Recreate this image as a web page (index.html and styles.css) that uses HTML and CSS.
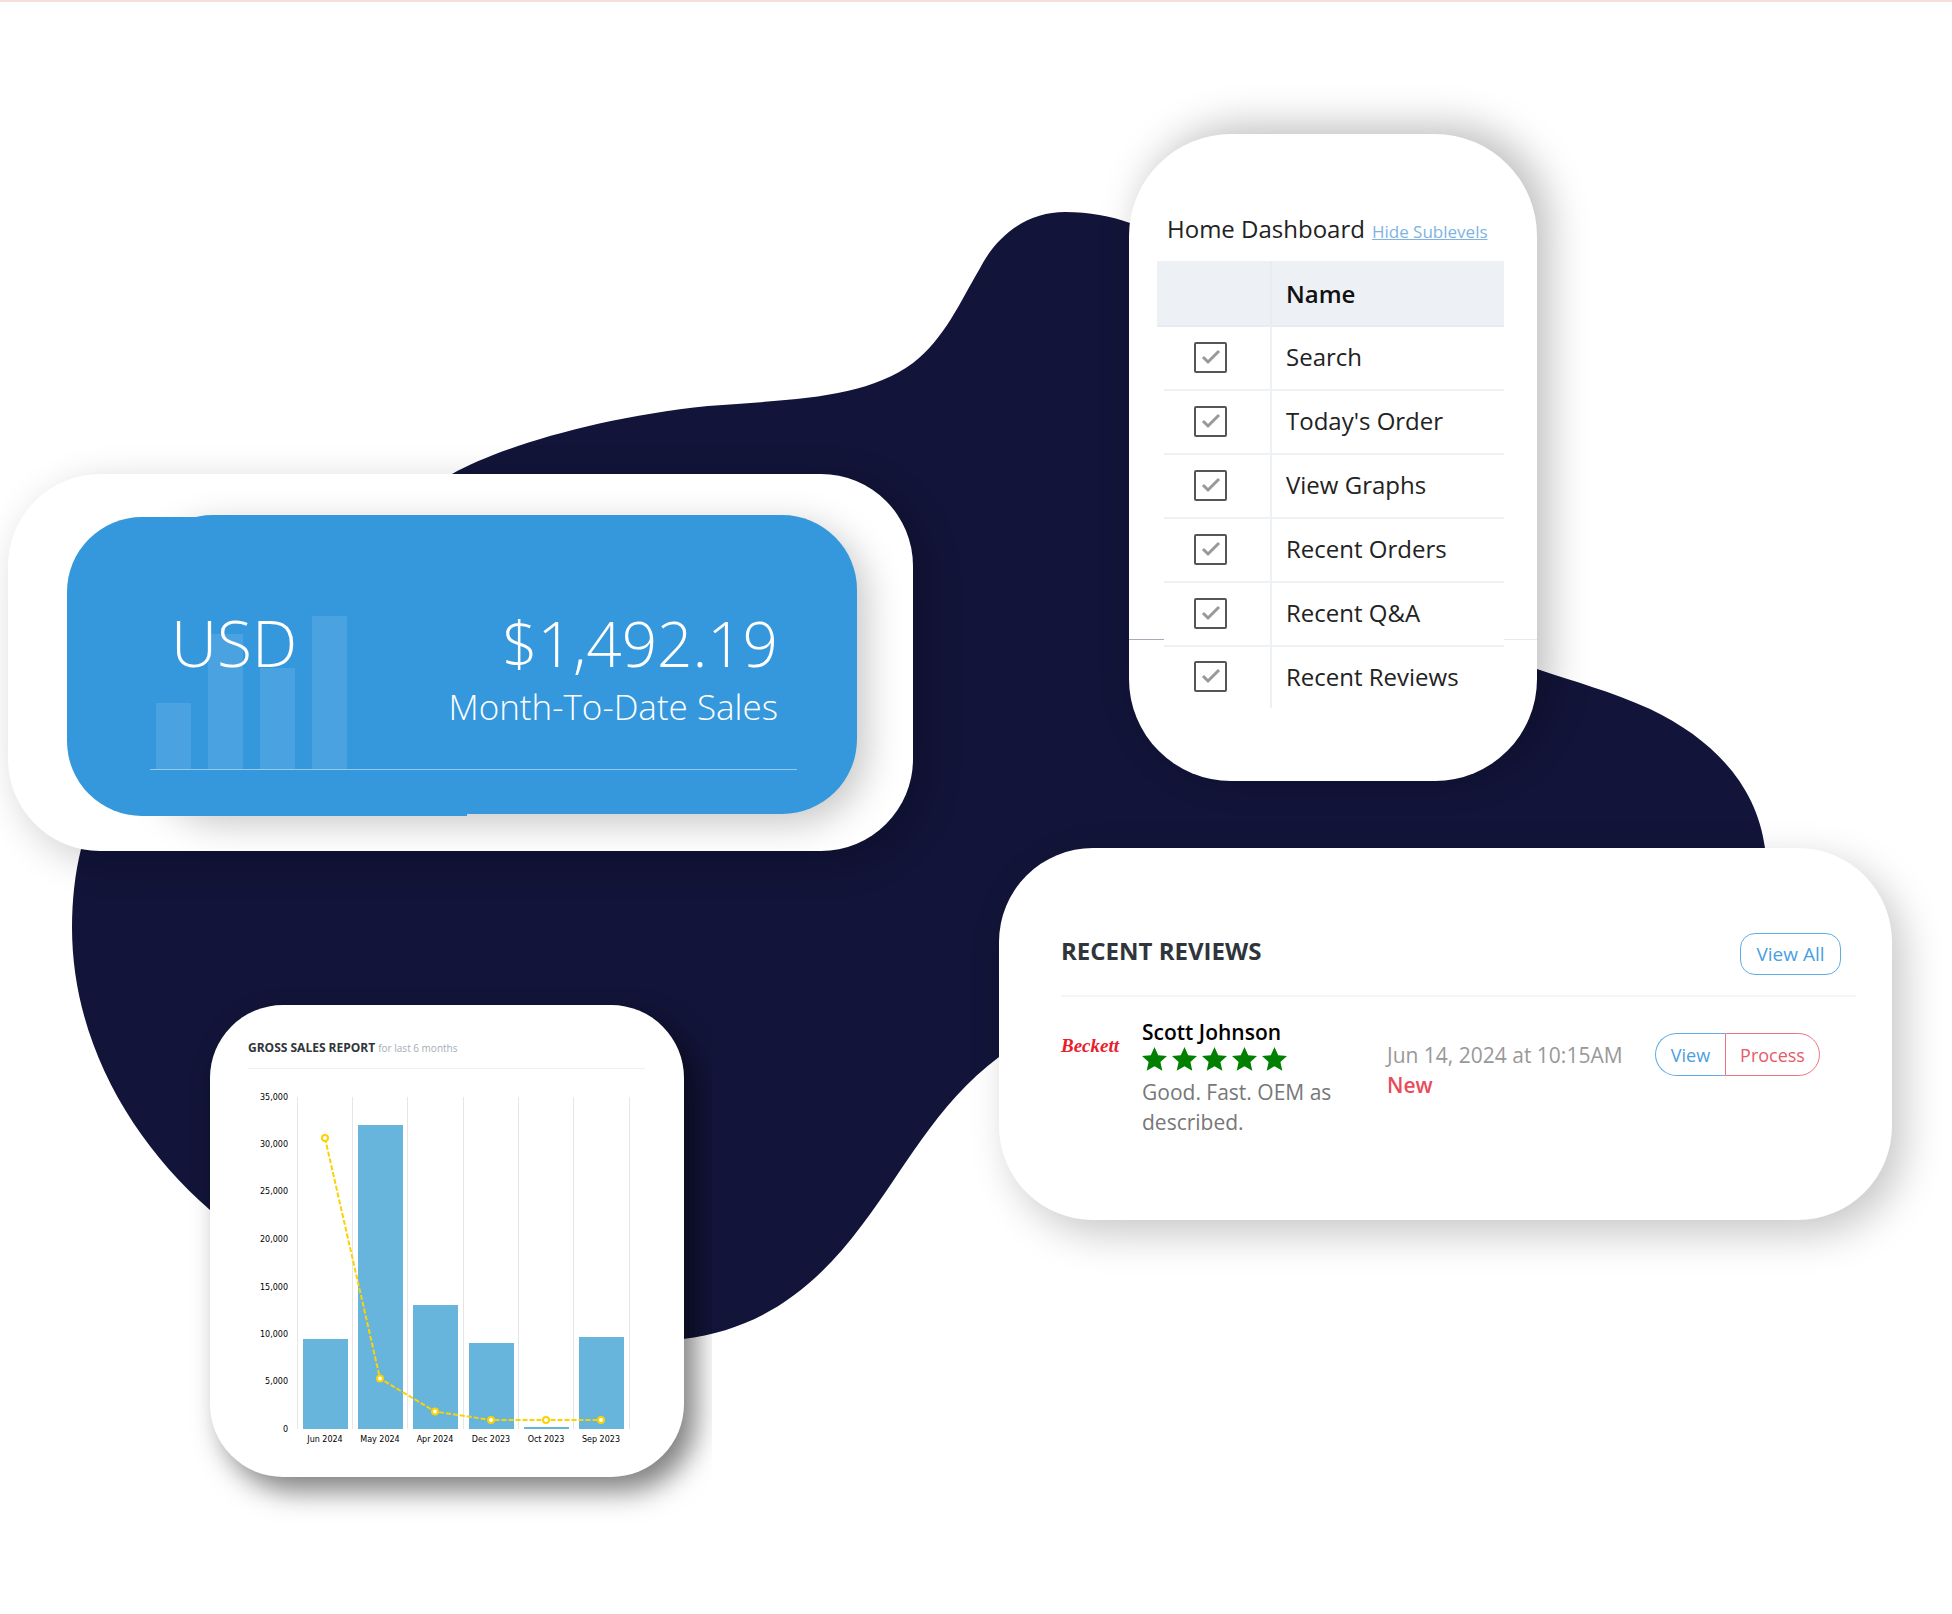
FILE: index.html
```html
<!DOCTYPE html>
<html lang="en">
<head>
<meta charset="utf-8">
<title>Store dashboard</title>
<link rel="stylesheet" href="styles.css">
</head>
<body>
<main class="stage">
  <svg class="blob" viewBox="0 0 1952 1614" aria-hidden="true">
    <path d="M452 474C500 447 600 417 708 406C800 399 865 398 913 363C945 338 960 302 979 270C998 232 1030 212 1065 212C1090 212 1110 216 1130 223L1330 400L1537 669C1575 682 1610 691 1650 709C1715 740 1757 787 1765 848L1700 950L999 1057C935 1105 903 1172 862 1225C810 1295 755 1330 683 1339L400 1300L210 1210C130 1140 72 1040 72 927C72 900 75 873 81 849L200 600Z"/>
  </svg>

  <div class="column column-left">
    <section class="card sales">
      <div class="sales-panel">
        <div class="figures">
          <svg class="bars" viewBox="0 0 191 153" aria-hidden="true">
            <path d="M0 87h35v66H0zM52 18h35v135H52zM104 52h35v101h-35zM156 0h35v153h-35z"/>
          </svg>
          <p class="currency">USD</p>
          <div class="total">
            <p class="amount">$1,492.19</p>
            <p class="caption">Month-To-Date Sales</p>
          </div>
        </div>
      </div>
    </section>

    <section class="card report">
      <header class="report-head">
        <h2>GROSS SALES REPORT</h2>
        <span>for last 6 months</span>
      </header>
      <svg class="chart" viewBox="0 0 474 408" role="img" aria-label="Gross sales for the last 6 months">
        <path class="gridlines" d="M87.5 28V360M142.5 28V360M197.5 28V360M253.5 28V360M308.5 28V360M363.5 28V360M419.5 28V360"/>
        <path class="columns" d="M93 270h45v90H93zM148 56h45v304h-45zM203 236h45v124h-45zM259 274h45v86h-45zM314 358h45v2h-45zM369 268h45v92h-45z"/>
        <polyline class="trend" points="115,69 170,309.500 225,342.500 281,351 336,351 391,351"/>
        <g class="points">
          <circle cx="115" cy="69" r="3"/><circle cx="170" cy="309.500" r="3"/><circle cx="225" cy="342.500" r="3"/>
          <circle cx="281" cy="351" r="3"/><circle cx="336" cy="351" r="3"/><circle cx="391" cy="351" r="3"/>
        </g>
        <g class="axis-y">
          <text x="78" y="31">35,000</text><text x="78" y="78">30,000</text><text x="78" y="125">25,000</text>
          <text x="78" y="173">20,000</text><text x="78" y="221">15,000</text><text x="78" y="268">10,000</text>
          <text x="78" y="315">5,000</text><text x="78" y="363">0</text>
        </g>
        <g class="axis-x">
          <text x="115" y="373">Jun 2024</text><text x="170" y="373">May 2024</text><text x="225" y="373">Apr 2024</text>
          <text x="281" y="373">Dec 2023</text><text x="336" y="373">Oct 2023</text><text x="391" y="373">Sep 2023</text>
        </g>
      </svg>
    </section>
  </div>

  <div class="column column-right">
    <section class="card dashboard">
      <header class="dashboard-head">
        <h2>Home Dashboard</h2>
        <a href="#sublevels">Hide Sublevels</a>
      </header>
      <table id="sublevels">
        <thead>
          <tr><th></th><th scope="col">Name</th></tr>
        </thead>
        <tbody>
          <tr><td><input type="checkbox" id="c1" checked></td><td><label for="c1">Search</label></td></tr>
          <tr><td><input type="checkbox" id="c2" checked></td><td><label for="c2">Today's Order</label></td></tr>
          <tr><td><input type="checkbox" id="c3" checked></td><td><label for="c3">View Graphs</label></td></tr>
          <tr><td><input type="checkbox" id="c4" checked></td><td><label for="c4">Recent Orders</label></td></tr>
          <tr><td><input type="checkbox" id="c5" checked></td><td><label for="c5">Recent Q&amp;A</label></td></tr>
          <tr><td><input type="checkbox" id="c6" checked></td><td><label for="c6">Recent Reviews</label></td></tr>
        </tbody>
      </table>
    </section>

    <section class="card reviews">
      <header class="reviews-head">
        <h2>RECENT REVIEWS</h2>
        <button type="button" class="btn view-all">View All</button>
      </header>
      <article class="review">
        <span class="brand">Beckett</span>
        <div class="review-body">
          <h3>Scott Johnson</h3>
          <svg class="stars" viewBox="0 0 145 24" role="img" aria-label="5 out of 5 stars">
            <defs><path id="star" d="M12.500 0l3.700 8.200 8.800.9-6.600 5.900 1.900 8.700-7.800-4.500-7.800 4.500 1.900-8.700L0 9.100l8.800-.9z"/></defs>
            <use href="#star"/><use href="#star" x="30"/><use href="#star" x="60"/><use href="#star" x="90"/><use href="#star" x="120"/>
          </svg>
          <p>Good. Fast. OEM as described.</p>
        </div>
        <div class="review-meta">
          <time datetime="2024-06-14T10:15">Jun 14, 2024 at 10:15AM</time>
          <strong>New</strong>
        </div>
        <div class="actions">
          <button type="button" class="btn view">View</button>
          <button type="button" class="btn process">Process</button>
        </div>
      </article>
    </section>
  </div>
</main>
</body>
</html>
```

FILE: styles.css
```css
* {
  box-sizing: border-box;
}

body {
  margin: 0;
  background: #fff;
  color: #222;
  font-family: "Open Sans", "Noto Sans", sans-serif;
}

h2, h3, p {
  margin: 0;
}

.stage {
  position: relative;
  display: grid;
  grid-template-columns: 905fr 893fr;
  column-gap: 86px;
  padding: 0 60px 136px 8px;
  border-top: 2px solid #f6dfdb;
  overflow: hidden;
}

.blob {
  position: absolute;
  top: -2px;
  left: 0;
  width: 100%;
  fill: #121439;
}

.column {
  position: relative;
  display: flex;
  flex-direction: column;
}

.column-left {
  padding-top: 472px;
  gap: 154px;
}

.column-right {
  padding-top: 132px;
  gap: 67px;
}

.card {
  background: #fff;
}

/* Month-to-date sales */
.sales {
  padding: 41px 56px 35px 59px;
  border-radius: 92px;
  box-shadow: 10px 10px 40px rgba(0, 0, 0, .2);
}

.sales-panel {
  position: relative;
  padding: 96px 60px 46px 83px;
}

.sales-panel::before,
.sales-panel::after {
  content: "";
  position: absolute;
  background: #3598dc;
}

.sales-panel::before {
  top: 0;
  right: 0;
  bottom: 2px;
  left: 71px;
  border-radius: 75px;
  box-shadow: 10px 10px 36px rgba(0, 0, 0, .22);
}

.sales-panel::after {
  top: 2px;
  bottom: 0;
  left: 0;
  width: 400px;
  border-radius: 75px 0 0 75px;
}

.figures {
  position: relative;
  z-index: 1;
  display: flex;
  justify-content: space-between;
  padding: 0 19px 44px 21px;
  border-bottom: 1px solid #93c9ee;
  color: #fff;
  font-weight: 300;
}

.bars {
  position: absolute;
  bottom: 0;
  left: 6px;
  width: 191px;
  fill: #4aa2e0;
}

.currency,
.amount {
  position: relative;
  font-size: 64px;
  line-height: 64px;
}

.amount {
  font-size: 62px;
}

.total {
  display: flex;
  flex-direction: column;
  gap: 14px;
  text-align: right;
}

.caption {
  font-size: 35px;
  line-height: 36px;
}

/* Gross sales report */
.report {
  width: 474px;
  margin-left: 202px;
  padding-top: 35px;
  border-radius: 73px;
  box-shadow: 12px 14px 28px rgba(0, 0, 0, .5);
  clip-path: inset(-60px -28px -60px -60px);
}

.report-head {
  display: flex;
  gap: 3px;
  margin: 0 39px 0 38px;
  padding-bottom: 12px;
  border-bottom: 1px solid #f0f0f0;
  font-size: 10px;
  line-height: 16px;
  color: #a5adb4;
}

.report-head h2 {
  font-size: 12px;
  color: #2f353b;
}

.chart {
  display: block;
  width: 100%;
}

.gridlines {
  stroke: #e6e6e6;
}

.columns {
  fill: #67b5dc;
}

.trend {
  fill: none;
  stroke: #fcd202;
  stroke-width: 2;
  stroke-dasharray: 5 2;
}

.points {
  fill: #fff;
  stroke: #fcd202;
  stroke-width: 2;
}

.axis-x,
.axis-y {
  fill: #000;
  font-family: "DejaVu Sans", sans-serif;
  font-size: 8px;
}

.axis-x {
  text-anchor: middle;
}

.axis-y {
  text-anchor: end;
}

/* Home dashboard */
.dashboard {
  position: relative;
  width: 408px;
  margin-left: 130px;
  padding: 77px 33px 73px 28px;
  border-radius: 102px;
  box-shadow: 12px -8px 40px rgba(0, 0, 0, .26);
}

.dashboard::before {
  content: "";
  position: absolute;
  bottom: 141px;
  left: 0;
  width: 35px;
  height: 1px;
  background: #a9aab8;
}

.dashboard::after {
  content: "";
  position: absolute;
  right: 0;
  bottom: 141px;
  width: 33px;
  height: 1px;
  background: #e9e9e9;
}

.dashboard-head {
  display: flex;
  align-items: baseline;
  gap: 7px;
  margin-bottom: 11px;
  padding-left: 10px;
  line-height: 36px;
  white-space: nowrap;
}

.dashboard-head h2 {
  font-size: 24px;
  font-weight: 400;
}

.dashboard-head a {
  color: #7db4e3;
  font-size: 17px;
}

.dashboard table {
  width: 100%;
  border-collapse: separate;
  border-spacing: 0;
  table-layout: fixed;
  font-size: 24px;
}

.dashboard th,
.dashboard td {
  height: 64px;
  padding: 0 0 3px 14px;
  border-bottom: 2px solid #eef1f5;
  text-align: left;
}

.dashboard th {
  height: 66px;
  padding-bottom: 0;
  background: #edf0f5;
  border-color: #e8ecf1;
  color: #111;
  font-weight: 600;
}

.dashboard th:first-child,
.dashboard td:first-child {
  width: 115px;
  padding-left: 0;
  border-right: 2px solid #edf1f5;
}

.dashboard th:first-child {
  border-right-color: #e8ecf1;
}

.dashboard td:first-child {
  border-bottom: 0;
  background: linear-gradient(#eef1f5, #eef1f5) 7px 100% / 100% 2px no-repeat;
}

.dashboard tr:last-child td {
  height: 61px;
  border-bottom: 0;
  background: none;
}

.dashboard input {
  appearance: none;
  display: block;
  width: 33px;
  height: 31px;
  margin: 0 0 0 37px;
  border: 2px solid #555;
  border-radius: 2px;
  background: url("data:image/svg+xml,%3Csvg xmlns='http://www.w3.org/2000/svg' viewBox='0 0 29 27'%3E%3Cpath d='M7 13l5 5L23 7' fill='none' stroke='%23999' stroke-width='3'/%3E%3C/svg%3E") center / 100% 100%;
}

/* Recent reviews */
.reviews {
  padding: 85px 36px 83px 62px;
  border-radius: 94px;
  box-shadow: 12px 14px 40px rgba(0, 0, 0, .22);
}

.reviews-head {
  display: flex;
  justify-content: space-between;
  padding: 0 15px 20px 0;
  border-bottom: 2px solid #f5f5f5;
}

.reviews-head h2 {
  color: #2f353b;
  font-size: 24px;
  font-weight: 700;
  line-height: 36px;
}

.btn {
  padding: 0;
  border: 1px solid #5dade6;
  background: #fff;
  color: #4c9fdf;
  font-family: inherit;
  font-size: 18px;
}

.view-all {
  width: 101px;
  height: 42px;
  border-radius: 15px;
  font-size: 19px;
}

.review {
  display: flex;
  margin-top: 20px;
  color: #777;
  font-size: 21px;
  line-height: 30px;
}

.brand {
  width: 81px;
  padding-top: 14px;
  color: #e8202c;
  font: italic 700 19px/30px "Liberation Serif", serif;
}

.review-body {
  width: 245px;
  padding-right: 40px;
}

.review-body h3 {
  color: #000;
  font-size: 21px;
  font-weight: 600;
}

.stars {
  display: block;
  width: 145px;
  height: 24px;
  margin-bottom: 6px;
  fill: green;
}

.review-meta {
  display: flex;
  flex: 1;
  flex-direction: column;
  padding-top: 23px;
  color: #999;
  white-space: nowrap;
}

.review-meta strong {
  color: #e94b5b;
  font-weight: 600;
}

.actions {
  display: flex;
  margin: 16px 36px 0 0;
}

.actions .btn {
  height: 43px;
}

.view {
  width: 70px;
  border-right: 0;
  border-radius: 22px 0 0 22px;
}

.process {
  width: 95px;
  border-color: #ec7480;
  border-radius: 0 22px 22px 0;
  color: #e75a67;
}
```
